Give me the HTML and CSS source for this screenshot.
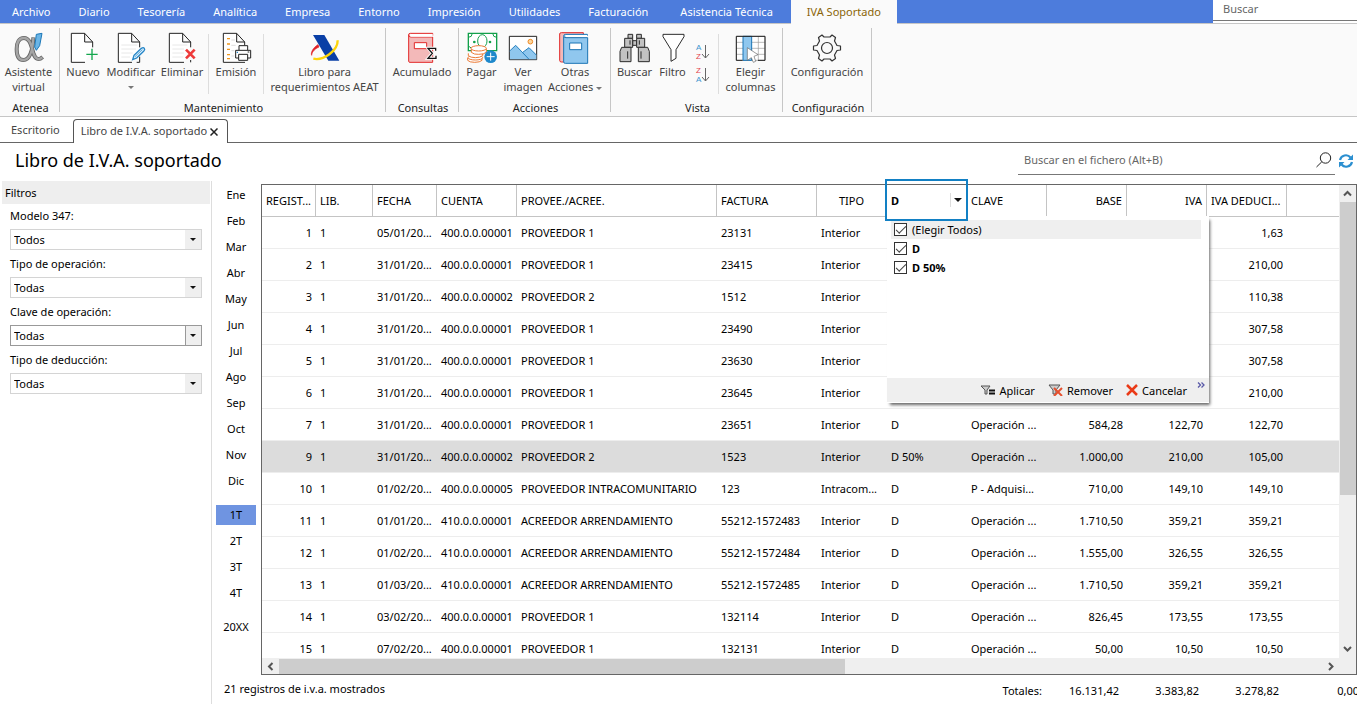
FILE: index.html
```html
<!DOCTYPE html>
<html lang="es">
<head>
<meta charset="utf-8">
<title>Libro de I.V.A. soportado</title>
<link rel="stylesheet" href="styles.css">
</head>
<body>
<header class="menubar">
  <nav class="menu">
    <a class="menu-item" href="#">Archivo</a>
    <a class="menu-item" href="#">Diario</a>
    <a class="menu-item" href="#">Tesorería</a>
    <a class="menu-item" href="#">Analítica</a>
    <a class="menu-item" href="#">Empresa</a>
    <a class="menu-item" href="#">Entorno</a>
    <a class="menu-item" href="#">Impresión</a>
    <a class="menu-item" href="#">Utilidades</a>
    <a class="menu-item" href="#">Facturación</a>
    <a class="menu-item menu-item-wide" href="#">Asistencia Técnica</a>
    <a class="menu-item menu-item-active" href="#">IVA Soportado</a>
  </nav>
  <div class="menu-search"><input class="menu-search-input" type="text" placeholder="Buscar" aria-label="Buscar"></div>
</header>

<section class="ribbon">
  <div class="group group-atenea">
    <div class="group-tools">
      <button class="tool">
        <svg class="icon" viewBox="36 96 96 96"><path d="M97 112C96 150 86 180 67 180C52 180 47 166 47 147C47 128 54 114 69 114C88 114 91 140 98 162C103 176 112 183 125 171" fill="none" stroke="#666" stroke-width="12"/><path d="M97 114C95 150 86 180 67 180C52 180 47 166 47 147C47 128 54 114 69 114C88 114 91 140 98 162C103 176 112 182 124 172" fill="none" stroke="#a6a6a6" stroke-width="7"/><path d="M106 103L123 100L116 137L106 151L101 141Z" fill="#6bb5e6" stroke="#1c78b8" stroke-width="3"/></svg>
        <span class="label">Asistente<br>virtual</span>
      </button>
    </div>
    <div class="group-name">Atenea</div>
  </div>

  <div class="group">
    <div class="group-tools">
      <button class="tool w46">
        <svg class="icon" viewBox="201 96 96 96"><path d="M255 187H214V100H254L278 126V142M254 100V126H278" fill="#fff" stroke="#222" stroke-width="3"/><path d="M276 146V180M259 163H293" stroke="#13a64c" stroke-width="4"/></svg>
        <span class="label">Nuevo</span>
      </button>
      <button class="tool w50">
        <svg class="icon" viewBox="345 96 96 96"><path d="M396 187H355V100H395L419 126V142M395 100V126H419M419 170V187H410" fill="#fff" stroke="#222" stroke-width="3"/><path d="M364 135H412M364 147H408M364 159H398M364 171H390" stroke="#ddd" stroke-width="2"/><path d="M398 179L402 166L424 145Q430 141 433 145Q436 149 431 154L410 174Z" fill="#d8eefb" stroke="#2585c7" stroke-width="4"/><path d="M405 170L427 149" stroke="#2585c7" stroke-width="2"/></svg>
        <span class="label">Modificar</span><span class="caret caret-below"></span>
      </button>
      <button class="tool w52">
        <svg class="icon" viewBox="498 96 96 96"><path d="M552 187H508V100H548L572 126V142M548 100V126H572M572 180V187" fill="#fff" stroke="#222" stroke-width="3"/><path d="M517 135H562M517 147H552M517 159H552M517 171H550" stroke="#ddd" stroke-width="2"/><path d="M558 149L584 175M584 149L558 175" stroke="#ee3a3a" stroke-width="8"/></svg>
        <span class="label">Eliminar</span>
      </button>
      <span class="divider"></span>
      <button class="tool w54">
        <svg class="icon" viewBox="663 96 96 96"><path d="M738 187H673V100H713L737 126V136M713 100V126H737" fill="#fff" stroke="#222" stroke-width="3"/><path d="M684 116H693M684 132H693M684 148H693M684 164H693M684 176H693" stroke="#f0981e" stroke-width="4"/><path d="M697 120H708M697 136H710M697 152H706M697 168H706" stroke="#ccc" stroke-width="2"/><g fill="#fff" stroke="#222" stroke-width="3"><path d="M720 151V137H746V151"/><path d="M710 151H755V174H710Z"/><path d="M719 163H746V181H719Z"/></g><path d="M746 156H751" stroke="#222" stroke-width="3"/><path d="M713 157H717" stroke="#2585c7" stroke-width="4"/></svg>
        <span class="label">Emisión</span>
      </button>
      <span class="divider"></span>
      <button class="tool w121">
        <svg class="icon" viewBox="147 96 96 96"><path d="M174 134C160 142 151 158 155 166C156 154 166 146 177 141Z" fill="#e02229" stroke="#e02229" stroke-width="2"/><path d="M159 105H193L238 182H205Z" fill="#0a3fa6"/><path d="M233 121C234 152 190 183 160 176" fill="none" stroke="#fdd40a" stroke-width="7"/></svg>
        <span class="label">Libro para<br>requerimientos AEAT</span>
      </button>
    </div>
    <div class="group-name">Mantenimiento</div>
  </div>

  <div class="group">
    <div class="group-tools">
      <button class="tool w72">
        <svg class="icon" viewBox="438 96 96 96"><path d="M446 104V184Q446 187 450 187H518V111H452Q446 111 446 104Q446 100 451 100H518V107" fill="#f3b9b9" stroke="#e22a2a" stroke-width="3"/><path d="M450 102H518V110H452Z" fill="#fff"/><path d="M463 128H500V146H463Z" fill="#fff" stroke="#e22a2a" stroke-width="3"/><path d="M527 152V145H504L517 160L504 175H528V167" fill="none" stroke="#fff" stroke-width="9"/><path d="M527 152V145H504L517 160L504 175H528V167" fill="none" stroke="#111" stroke-width="4"/></svg>
        <span class="label">Acumulado</span>
      </button>
    </div>
    <div class="group-name">Consultas</div>
  </div>

  <div class="group group-acciones">
    <div class="group-tools">
      <button class="tool w45">
        <svg class="icon" viewBox="18 96 96 96"><path d="M25 100H110V152H25Z" fill="#fff" stroke="#12a04a" stroke-width="4"/><path d="M25 112Q36 112 37 100M98 100Q99 112 110 112M25 140Q30 139 34 145" fill="none" stroke="#12a04a" stroke-width="3"/><ellipse cx="67" cy="123" rx="14" ry="19" fill="#fff" stroke="#12a04a" stroke-width="3"/><circle cx="43" cy="126" r="4" fill="#12a04a"/><circle cx="90" cy="126" r="4" fill="#12a04a"/><g fill="#fff" stroke="#ec7a35" stroke-width="3"><path d="M23 174V181Q28 187 44 187Q60 187 66 181V174"/><ellipse cx="46" cy="173" rx="22" ry="7"/><path d="M25 160V167Q32 173 46 173Q60 173 68 167V160"/><path d="M34 146V157Q42 164 56 163Q72 163 79 157V146"/><ellipse cx="56" cy="145" rx="23" ry="8"/></g><circle cx="92" cy="170" r="19" fill="#1e88cb"/><path d="M92 158V182M80 170H104" stroke="#fff" stroke-width="3"/></svg>
        <span class="label">Pagar</span>
      </button>
      <button class="tool w38">
        <svg class="icon" viewBox="141 96 96 96"><path d="M148 109H230V179H148Z" fill="#fff" stroke="#222" stroke-width="3"/><circle cx="211" cy="125" r="7" fill="#fbd7a0" stroke="#f08a24" stroke-width="3"/><path d="M150 153L167 136L187 158L207 143L229 164V178H150Z" fill="#8fc7ee"/><path d="M149 153L167 136L207 178M187 158L207 143L229 165" fill="none" stroke="#2580bf" stroke-width="3"/></svg>
        <span class="label">Ver<br>imagen</span>
      </button>
      <button class="tool w66">
        <svg class="icon" viewBox="297 96 96 96"><path d="M311 186H304Q299 186 299 181V102Q299 98 304 98H370V104" fill="#f3b9b9" stroke="#e22a2a" stroke-width="3"/><path d="M311 110V186Q311 190 316 190H383V113H318Q311 113 311 108Q311 103 317 103H382V108" fill="#90c7ee" stroke="#1b75b5" stroke-width="3"/><path d="M316 105H382V111H317Z" fill="#fff"/><path d="M329 129H365V149H329Z" fill="#fff" stroke="#1b75b5" stroke-width="3"/></svg>
        <span class="label">Otras<br>Acciones <i class="caret"></i></span>
      </button>
    </div>
    <div class="group-name">Acciones</div>
  </div>

  <div class="group">
    <div class="group-tools">
      <button class="tool w47">
        <svg class="icon" viewBox="475 96 96 96"><g fill="#c2c2c2" stroke="#2b2b2b" stroke-width="3"><path d="M502 103H516V115H502ZM528 103H542V115H528ZM516 122H528V136H516Z"/><path d="M492 115H516V142H492ZM528 115H552V142H528Z"/><path d="M483 142H511V185H478V154ZM533 142H561L566 154V185H533Z"/></g><path d="M508 121V134M536 121V134M501 154V176M541 154V176" stroke="#2b2b2b" stroke-width="3"/></svg>
        <span class="label">Buscar</span>
      </button>
      <button class="tool w29">
        <svg class="icon" viewBox="589 96 96 96"><path d="M607 103H670V110L646 149V175L631 184V149L607 110Z" fill="#fff" stroke="#2b2b2b" stroke-width="3"/></svg>
        <span class="label">Filtro</span>
      </button>
      <div class="sort-tools">
        <button class="sort" aria-label="Orden ascendente">
          <svg class="sort-icon" viewBox="0 0 16 20"><text x="1" y="8" class="sort-letter sort-a">A</text><text x="1" y="17" class="sort-letter sort-z">Z</text><path d="M10.500 3V16M7 12L10.500 16L14 12" fill="none" stroke="#666"/></svg>
        </button>
        <button class="sort" aria-label="Orden descendente">
          <svg class="sort-icon" viewBox="0 0 16 20"><text x="1" y="8" class="sort-letter sort-z">Z</text><text x="1" y="17" class="sort-letter sort-a">A</text><path d="M10.500 3V16M7 12L10.500 16L14 12" fill="none" stroke="#666"/></svg>
        </button>
      </div>
      <span class="divider"></span>
      <button class="tool w63">
        <svg class="icon" viewBox="823 96 96 96"><path d="M827 109H913V181H827Z" fill="#fff" stroke="#888" stroke-width="2"/><path d="M827 127H913M827 145H913M827 163H913M893 109V181" stroke="#999" stroke-width="2"/><path d="M847 109H873V181H847Z" fill="#8fc7ee" stroke="#1b75b5" stroke-width="3"/><path d="M827 109V181H846M827 109H913V181H892" fill="none" stroke="#222" stroke-width="3"/><path d="M860 143L892 164L880 169L885 184L878 187L872 173L860 181Z" fill="#fff" stroke="#666" stroke-width="2"/></svg>
        <span class="label">Elegir<br>columnas</span>
      </button>
    </div>
    <div class="group-name">Vista</div>
  </div>

  <div class="group">
    <div class="group-tools">
      <button class="tool w88">
        <svg class="icon" viewBox="0 0 32 32"><path d="M2.500 14L6 13.500L8.500 9L7.500 5.500L11 3L13 5H19L21 3L24.500 5.500L23.500 9L26 13.500L29.500 14V18L26 18.500L23.500 23L24.500 26.500L21 29L19 27H13L11 29L7.500 26.500L8.500 23L6 18.500L2.500 18Z" fill="none" stroke="#333" stroke-linejoin="round" stroke-width="1.200"/><circle cx="16" cy="16" r="5.500" fill="none" stroke="#333" stroke-width="1.200"/></svg>
        <span class="label">Configuración</span>
      </button>
    </div>
    <div class="group-name">Configuración</div>
  </div>
</section>

<nav class="doc-tabs">
  <a class="doc-tab" href="#">Escritorio</a>
  <div class="doc-tab doc-tab-active"><a href="#">Libro de I.V.A. soportado</a>
    <button class="close" aria-label="Cerrar"><svg class="close-icon" viewBox="0 0 8 8"><path d="M.500 .500L7.500 7.500M7.500 .500L.500 7.500" stroke="#222" stroke-width="1.500"/></svg></button>
  </div>
</nav>

<main class="main">
  <div class="title-row">
    <h1 class="title">Libro de I.V.A. soportado</h1>
    <div class="file-search">
      <input class="file-search-input" type="text" placeholder="Buscar en el fichero (Alt+B)" aria-label="Buscar en el fichero">
      <svg class="icon16" viewBox="0 0 16 16"><circle cx="9.500" cy="6" r="5.200" fill="none" stroke="#222"/><path d="M5.800 9.800L.500 15" stroke="#222"/></svg>
    </div>
    <button class="refresh" aria-label="Actualizar"><svg class="icon16" viewBox="0 0 16 16"><path d="M2 7A6 6 0 0 1 12.500 4.500M14 9A6 6 0 0 1 3.500 11.500" fill="none" stroke="#2b8fd0" stroke-width="2.200"/><path d="M15 1.500V7H9.500ZM1 14.500V9H6.500Z" fill="#2b8fd0"/></svg></button>
  </div>

  <div class="content">
    <aside class="filters">
      <h2 class="filters-title">Filtros</h2>
      <div class="field"><label for="f1">Modelo 347:</label><select id="f1" class="select"><option>Todos</option></select></div>
      <div class="field"><label for="f2">Tipo de operación:</label><select id="f2" class="select"><option>Todas</option></select></div>
      <div class="field"><label for="f3">Clave de operación:</label><select id="f3" class="select select-focus"><option>Todas</option></select></div>
      <div class="field"><label for="f4">Tipo de deducción:</label><select id="f4" class="select"><option>Todas</option></select></div>
    </aside>

    <nav class="periods">
      <button class="period">Ene</button><button class="period">Feb</button><button class="period">Mar</button><button class="period">Abr</button><button class="period">May</button><button class="period">Jun</button><button class="period">Jul</button><button class="period">Ago</button><button class="period">Sep</button><button class="period">Oct</button><button class="period">Nov</button><button class="period">Dic</button>
      <button class="period period-first period-active">1T</button><button class="period">2T</button><button class="period">3T</button><button class="period">4T</button>
      <button class="period period-first">20XX</button>
    </nav>

    <div class="book">
      <div class="grid">
        <div class="viewport">
          <table class="table">
            <colgroup><col class="c54"><col class="c57"><col class="c64"><col class="c80"><col class="c200"><col class="c100"><col class="c70"><col class="c80"><col class="c80"><col class="c80"><col class="c80"><col class="c80"><col></colgroup>
            <thead><tr><th>REGIST...</th><th>LIB.</th><th>FECHA</th><th>CUENTA</th><th>PROVEE./ACREE.</th><th>FACTURA</th><th class="mid">TIPO</th><th class="filtered"><span class="filtered-box">D<button class="filter-open" aria-label="Filtrar"><span class="caret caret-dark"></span></button></span></th><th>CLAVE</th><th class="num">BASE</th><th class="num">IVA</th><th>IVA DEDUCI...</th><th></th></tr></thead>
            <tbody>
              <tr><td class="num">1</td><td>1</td><td>05/01/20...</td><td>400.0.0.00001</td><td>PROVEEDOR 1</td><td>23131</td><td>Interior</td><td></td><td></td><td></td><td></td><td class="num">1,63</td><td></td></tr>
              <tr><td class="num">2</td><td>1</td><td>31/01/20...</td><td>400.0.0.00001</td><td>PROVEEDOR 1</td><td>23415</td><td>Interior</td><td></td><td></td><td></td><td></td><td class="num">210,00</td><td></td></tr>
              <tr><td class="num">3</td><td>1</td><td>31/01/20...</td><td>400.0.0.00002</td><td>PROVEEDOR 2</td><td>1512</td><td>Interior</td><td></td><td></td><td></td><td></td><td class="num">110,38</td><td></td></tr>
              <tr><td class="num">4</td><td>1</td><td>31/01/20...</td><td>400.0.0.00001</td><td>PROVEEDOR 1</td><td>23490</td><td>Interior</td><td></td><td></td><td></td><td></td><td class="num">307,58</td><td></td></tr>
              <tr><td class="num">5</td><td>1</td><td>31/01/20...</td><td>400.0.0.00001</td><td>PROVEEDOR 1</td><td>23630</td><td>Interior</td><td></td><td></td><td></td><td></td><td class="num">307,58</td><td></td></tr>
              <tr><td class="num">6</td><td>1</td><td>31/01/20...</td><td>400.0.0.00001</td><td>PROVEEDOR 1</td><td>23645</td><td>Interior</td><td></td><td></td><td></td><td></td><td class="num">210,00</td><td></td></tr>
              <tr><td class="num">7</td><td>1</td><td>31/01/20...</td><td>400.0.0.00001</td><td>PROVEEDOR 1</td><td>23651</td><td>Interior</td><td>D</td><td>Operación ...</td><td class="num">584,28</td><td class="num">122,70</td><td class="num">122,70</td><td></td></tr>
              <tr class="selected"><td class="num">9</td><td>1</td><td>31/01/20...</td><td>400.0.0.00002</td><td>PROVEEDOR 2</td><td>1523</td><td>Interior</td><td>D 50%</td><td>Operación ...</td><td class="num">1.000,00</td><td class="num">210,00</td><td class="num">105,00</td><td></td></tr>
              <tr><td class="num">10</td><td>1</td><td>01/02/20...</td><td>400.0.0.00005</td><td>PROVEEDOR INTRACOMUNITARIO</td><td>123</td><td>Intracom...</td><td>D</td><td>P - Adquisi...</td><td class="num">710,00</td><td class="num">149,10</td><td class="num">149,10</td><td></td></tr>
              <tr><td class="num">11</td><td>1</td><td>01/01/20...</td><td>410.0.0.00001</td><td>ACREEDOR ARRENDAMIENTO</td><td>55212-1572483</td><td>Interior</td><td>D</td><td>Operación ...</td><td class="num">1.710,50</td><td class="num">359,21</td><td class="num">359,21</td><td></td></tr>
              <tr><td class="num">12</td><td>1</td><td>01/02/20...</td><td>410.0.0.00001</td><td>ACREEDOR ARRENDAMIENTO</td><td>55212-1572484</td><td>Interior</td><td>D</td><td>Operación ...</td><td class="num">1.555,00</td><td class="num">326,55</td><td class="num">326,55</td><td></td></tr>
              <tr><td class="num">13</td><td>1</td><td>01/03/20...</td><td>410.0.0.00001</td><td>ACREEDOR ARRENDAMIENTO</td><td>55212-1572485</td><td>Interior</td><td>D</td><td>Operación ...</td><td class="num">1.710,50</td><td class="num">359,21</td><td class="num">359,21</td><td></td></tr>
              <tr><td class="num">14</td><td>1</td><td>03/02/20...</td><td>400.0.0.00001</td><td>PROVEEDOR 1</td><td>132114</td><td>Interior</td><td>D</td><td>Operación ...</td><td class="num">826,45</td><td class="num">173,55</td><td class="num">173,55</td><td></td></tr>
              <tr><td class="num">15</td><td>1</td><td>07/02/20...</td><td>400.0.0.00001</td><td>PROVEEDOR 1</td><td>132131</td><td>Interior</td><td>D</td><td>Operación ...</td><td class="num">50,00</td><td class="num">10,50</td><td class="num">10,50</td><td></td></tr>
            </tbody>
          </table>
        </div>
        <div class="vscroll"><svg class="arrow" viewBox="0 0 9 9"><path d="M1 6.500L4.500 3L8 6.500"/></svg><div class="vtrack"><div class="vthumb"></div></div><svg class="arrow" viewBox="0 0 9 9"><path d="M1 3L4.500 6.500L8 3"/></svg></div>
        <div class="hscroll"><svg class="arrow" viewBox="0 0 9 9"><path d="M6.500 1L3 4.500L6.500 8"/></svg><div class="htrack"><div class="hthumb"></div></div><svg class="arrow" viewBox="0 0 9 9"><path d="M3 1L6.500 4.500L3 8"/></svg></div>
        <div class="focus-frame"></div>
        <div class="popup">
          <div class="options">
            <label class="option option-hover"><input class="check" type="checkbox" checked>(Elegir Todos)</label>
            <label class="option option-bold"><input class="check" type="checkbox" checked>D</label>
            <label class="option option-bold"><input class="check" type="checkbox" checked>D 50%</label>
          </div>
          <div class="popup-actions">
            <button class="action"><svg class="action-icon" viewBox="0 0 15 12"><path d="M1 2H10L7 6V10H5V6Z" fill="#ccc" stroke="#555"/><path d="M9 6.500H15M9 9.500H15" stroke="#111" stroke-width="2"/></svg>Aplicar</button>
            <button class="action"><svg class="action-icon" viewBox="0 0 15 12"><path d="M1 1H12L8 6V10H5V6Z" fill="#ccc" stroke="#555"/><path d="M6 4L14 12M14 4L6 12" stroke="#e5502e" stroke-width="2"/></svg>Remover</button>
            <button class="action"><svg class="action-icon action-icon-cancel" viewBox="0 0 12 12"><path d="M1 1L11 11M11 1L1 11" stroke="#ea3a17" stroke-width="2.500"/></svg>Cancelar</button>
            <button class="more" aria-label="Más"><svg class="more-icon" viewBox="0 0 8 6"><path d="M1 .500L3.500 3L1 5.500M4.500 .500L7 3L4.500 5.500" fill="none" stroke="#5a5aa8" stroke-width="1.300"/></svg></button>
          </div>
        </div>
      </div>
      <footer class="footer">
        <span class="count">21 registros de i.v.a. mostrados</span>
        <div class="totals"><span class="total total-label">Totales:</span><span class="total">16.131,42</span><span class="total">3.383,82</span><span class="total">3.278,82</span><span class="total">0,00</span></div>
      </footer>
    </div>
  </div>
</main>
</body>
</html>
```
FILE: styles.css
```css
* { box-sizing: border-box; }
body {
  margin: 0;
  height: 100vh;
  overflow: hidden;
  display: flex;
  flex-direction: column;
  background: #fff;
  color: #000;
  font: 11px/15px "Noto Sans", "Open Sans", sans-serif;
}
button { margin: 0; padding: 0; border: 0; background: none; color: inherit; font: inherit; }
a { color: inherit; text-decoration: none; }
svg { display: block; flex: none; }
input, select { font: inherit; }

/* menu bar */
.menubar { display: flex; justify-content: space-between; height: 24px; flex: none; background: #4d7cdc; border-bottom: 1px solid #c6c6c6; }
.menu { display: flex; white-space: nowrap; }
.menu-item { height: 24px; padding: 0 14px; line-height: 24px; color: #fff; }
.menu-item:first-child { padding-left: 12px; }
.menu-item-wide { padding: 0 18px; }
.menu-item-active { padding: 0 16px; background: #fafafa; color: #8a6508; }
.menu-search { width: 144px; height: 23px; padding-bottom: 2px; background: #fff; }
.menu-search-input { width: 100%; height: 21px; padding: 0 10px 4px; border: 0; border-bottom: 1px solid #777; outline: 0; background: none; }
::placeholder { color: #666; opacity: 1; }

/* ribbon */
.ribbon { display: flex; flex: none; height: 93px; padding: 4px 0; background: #fafafa; border-bottom: 1px solid #c6c6c6; color: #444; }
.group { display: flex; flex-direction: column; justify-content: space-between; border-right: 1px solid #c6c6c6; }
.group-atenea { width: 60px; }
.group-acciones { width: 152px; }
.group-tools { display: flex; height: 69px; }
.group-name { height: 12px; line-height: 16px; padding-left: 2px; text-align: center; color: #222; }
.tool { display: flex; flex-direction: column; align-items: center; flex: none; padding-top: 4px; white-space: nowrap; }
.group-atenea .tool { width: 57px; }
.w29 { width: 29px; }
.w38 { width: 38px; }
.w45 { width: 45px; }
.w46 { width: 46px; }
.w47 { width: 47px; }
.w50 { width: 50px; }
.w52 { width: 52px; }
.w54 { width: 54px; }
.w63 { width: 63px; }
.w66 { width: 66px; }
.w72 { width: 72px; }
.w88 { width: 88px; }
.w121 { width: 121px; }
.icon { width: 32px; height: 32px; }
.label { display: block; }
.divider { width: 1px; height: 60px; margin-top: 6px; background: #ddd; }
.caret { display: inline-block; vertical-align: middle; border: 3px solid transparent; border-top-color: #777; border-bottom: 0; }
.caret-below { margin-top: 7px; }
.caret-dark { border-width: 4px 4px 0; border-top-color: #111; }
.sort-tools { display: flex; flex-direction: column; gap: 3px; width: 31px; padding: 14px 8px 0; }
.sort-icon { width: 16px; height: 20px; }
.sort-letter { font-family: "Liberation Sans", Arial, sans-serif; font-size: 8px; }
.sort-a { fill: #3d95cf; }
.sort-z { fill: #e2444d; }

/* document tabs */
.doc-tabs { display: flex; align-items: flex-end; flex: none; height: 26px; border-bottom: 1px solid #666; color: #444; }
.doc-tab { height: 24px; padding: 0 13px 0 11px; line-height: 24px; }
.doc-tab-active { display: flex; gap: 3px; margin-bottom: -1px; padding: 0 9px 0 7px; line-height: 22px; border: 1px solid #555; border-bottom: 0; border-radius: 4px 4px 0 0; background: #fff; }
.close-icon { width: 8px; height: 8px; }

/* title row */
.main { display: flex; flex-direction: column; flex: 1; min-height: 0; }
.title-row { display: flex; align-items: center; flex: none; height: 38px; padding: 0 3px 3px 15px; }
.title { flex: 1; margin: 0; padding-bottom: 2px; font-size: 18px; line-height: 24px; font-weight: 400; }
.file-search { display: flex; align-items: center; width: 317px; height: 29px; margin-right: 3px; padding: 0 3px 0 6px; border-bottom: 1px solid #777; }
.file-search-input { flex: 1; padding: 0 0 2px; border: 0; outline: 0; background: none; }
.icon16 { width: 16px; height: 16px; }

/* filters */
.content { display: flex; flex: 1; min-height: 0; }
.filters { flex: none; width: 212px; padding: 0 1px 0 2px; border-right: 1px solid #ddd; }
.filters-title { margin: 0 0 4px; padding: 0 3px; font-size: 11px; line-height: 23px; font-weight: 400; background: #eee; }
.field { position: relative; display: flex; flex-direction: column; gap: 6px; height: 48px; padding: 0 8px; }
.select {
  appearance: none;
  height: 21px;
  padding: 0 3px;
  border: 1px solid #d4d4d4;
  border-radius: 0;
  color: #000;
  outline: 0;
  background: linear-gradient(#efefef, #efefef) right / 16px 100% no-repeat, #fff;
}
.field::after { content: ""; position: absolute; right: 14px; top: 30px; border: 3px solid transparent; border-top-color: #111; border-bottom: 0; }
.select-focus {
  border-color: #999;
  background:
    linear-gradient(#999, #999) right 15px top / 1px 100% no-repeat,
    linear-gradient(#efefef, #efefef) right / 15px 100% no-repeat,
    #fff;
}

/* periods */
.periods { display: flex; flex-direction: column; gap: 6px; flex: none; width: 49px; padding: 4px 5px 0 4px; }
.period { height: 20px; padding-bottom: 2px; text-align: center; }
.period-first { margin-top: 8px; }
.period-active { background: #6f94e1; }

/* grid */
.book { display: flex; flex-direction: column; flex: 1; min-width: 0; padding-top: 3px; }
.grid { position: relative; display: grid; grid-template-columns: minmax(0, 1fr) 17px; grid-template-rows: minmax(0, 1fr) 16px; flex: 1; min-height: 0; border: 1px solid #666; }
.viewport { overflow: hidden; }
.table { width: 100%; table-layout: fixed; border-collapse: separate; border-spacing: 0; }
.c54 { width: 54px; }
.c57 { width: 57px; }
.c64 { width: 64px; }
.c70 { width: 70px; }
.c80 { width: 80px; }
.c100 { width: 100px; }
.c200 { width: 200px; }
th, td { height: 32px; padding: 0 4px; text-align: left; font-weight: 400; white-space: nowrap; }
th { padding-bottom: 1px; border-right: 1px solid #c4c4c4; border-bottom: 1px solid #c4c4c4; }
th:last-child { border-right: 0; }
td { border-bottom: 1px solid #ededed; }
.num { text-align: right; }
.mid { text-align: center; }
.selected td { background: #dcdcdc; }
.filtered { padding-right: 1px; font-weight: 700; }
.filtered-box { display: flex; justify-content: space-between; align-items: center; }
.filter-open { display: flex; align-items: center; justify-content: center; width: 15px; height: 14px; border-left: 1px solid #ddd; }
.vscroll { display: flex; flex-direction: column; align-items: center; padding: 4px 0 5px; background: #efefef; }
.vtrack { flex: 1; width: 100%; margin: 4px 0; padding-left: 1px; }
.vthumb { height: 67%; background: #cdcdcd; }
.hscroll { grid-column: 1 / 3; display: flex; align-items: center; padding: 0 21px 0 4px; background: #efefef; }
.htrack { flex: 1; height: 15px; margin: 0 4px; }
.hthumb { width: 54.3%; height: 15px; background: #cdcdcd; }
.arrow { width: 9px; height: 9px; fill: none; stroke: #555; stroke-width: 2; }

/* column filter */
.focus-frame { position: absolute; left: 623px; top: -6px; width: 83px; height: 42px; border: 2px solid #1280c4; z-index: 2; pointer-events: none; }
.popup { position: absolute; left: 625px; top: 31px; width: 322px; display: flex; flex-direction: column; padding-bottom: 1px; background: #fff; box-shadow: 2px 3px 3px -1px #666; }
.options { height: 162px; padding: 4px 8px 0 4px; }
.option { display: flex; align-items: center; gap: 5px; height: 19px; padding-left: 3px; }
.option-hover { background: #efefef; }
.option-bold { font-weight: 700; }
.check { appearance: none; width: 13px; height: 13px; margin: 0; border: 1px solid #333; background: #fff; }
.check:checked::after { content: ""; display: block; width: 9px; height: 4px; margin: 2px 1px; border: solid #444; border-width: 0 0 1px 1px; transform: rotate(-45deg); }
.popup-actions { display: flex; justify-content: flex-end; gap: 13px; height: 24px; padding-right: 4px; background: #efefef; }
.action { display: flex; align-items: center; gap: 4px; }
.action-icon { width: 15px; height: 12px; }
.action-icon-cancel { width: 12px; }
.more { display: flex; margin-left: -3px; padding-top: 4px; }
.more-icon { width: 8px; height: 6px; }

/* footer */
.footer { display: flex; justify-content: space-between; flex: none; height: 29px; margin-left: -37px; padding-top: 6px; overflow: hidden; }
.totals { display: flex; margin-right: -2px; padding-top: 2px; text-align: right; }
.total { width: 80px; }
.total-label { margin-right: -3px; }
```
